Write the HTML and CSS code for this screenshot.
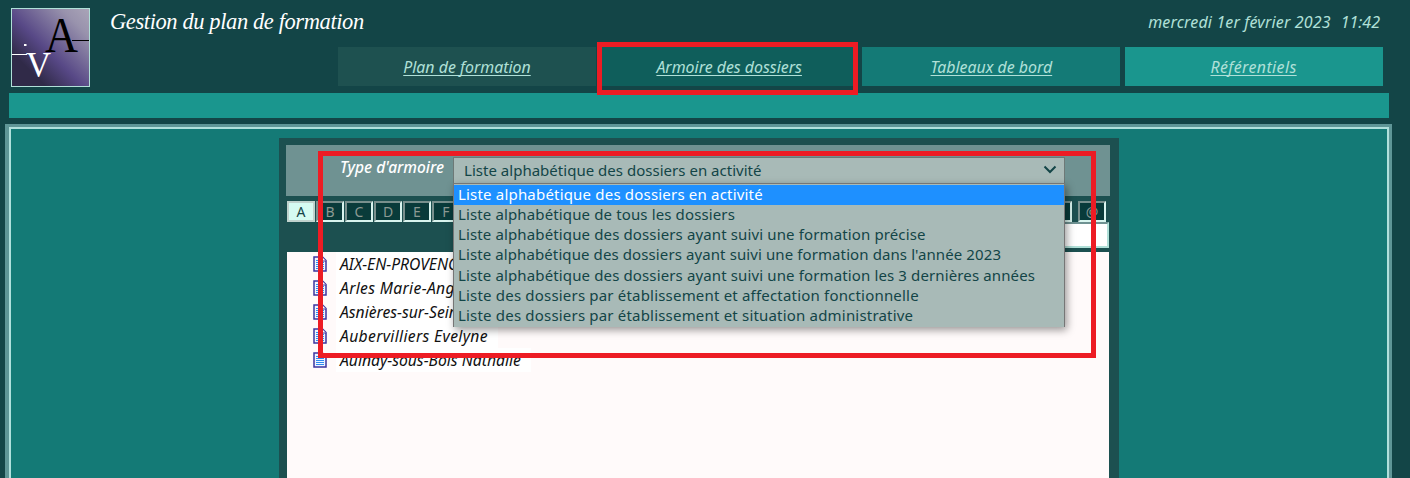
FILE: index.html
```html
<!DOCTYPE html>
<html lang="fr">
<head>
<meta charset="utf-8">
<title>Gestion du plan de formation</title>
<link rel="stylesheet" href="styles.css">
</head>
<body>
<header class="header">
  <svg class="logo" width="79" height="79" viewBox="0 0 79 79">
    <defs><linearGradient id="g" x1="0" y1="1" x2="1" y2="0">
      <stop offset="0" stop-color="#302a48"/><stop offset=".22" stop-color="#302a48"/><stop offset=".46" stop-color="#574886"/><stop offset=".82" stop-color="#9993ad"/><stop offset="1" stop-color="#aaa5b8"/>
    </linearGradient></defs>
    <rect x=".5" y=".5" width="78" height="78" fill="url(#g)" stroke="#b0e0d8"/>
    <path d="M61 32.5H78" stroke="#000"/>
    <path d="M1 46.5H16" stroke="#fff"/>
    <rect x="13" y="36" width="2.5" height="2" fill="#fff"/>
    <text class="logo-a" x="34" y="44" textLength="33" lengthAdjust="spacingAndGlyphs">A</text>
    <text class="logo-v" x="15" y="69" textLength="25" lengthAdjust="spacingAndGlyphs">V</text>
  </svg>
  <div class="head-main">
    <div class="head-row">
      <h1 class="title">Gestion du plan de formation</h1>
      <div class="date"><span class="day">mercredi 1er février 2023</span><span class="time">11:42</span></div>
    </div>
    <nav class="tabs">
      <a class="tab tab-plan" href="#">Plan de formation</a>
      <a class="tab tab-files" href="#">Armoire des dossiers</a>
      <a class="tab tab-board" href="#">Tableaux de bord</a>
      <a class="tab tab-refs" href="#">Référentiels</a>
    </nav>
  </div>
</header>
<div class="strip"></div>
<main class="frame">
  <section class="panel">
    <div class="type-bar">
      <label class="type-label">Type d'armoire</label>
      <div class="select">
        <div class="select-box"><span>Liste alphabétique des dossiers en activité</span>
          <svg width="14" height="9" viewBox="0 0 14 9"><path d="M1.5 1.5L7 7L12.500 1.500" fill="none" stroke="#134547" stroke-width="2"/></svg>
        </div>
        <ul class="options">
          <li class="option selected">Liste alphabétique des dossiers en activité</li>
          <li class="option">Liste alphabétique de tous les dossiers</li>
          <li class="option">Liste alphabétique des dossiers ayant suivi une formation précise</li>
          <li class="option year">Liste alphabétique des dossiers ayant suivi une formation dans l'année 2023</li>
          <li class="option">Liste alphabétique des dossiers ayant suivi une formation les 3 dernières années</li>
          <li class="option by-site">Liste des dossiers par établissement et affectation fonctionnelle</li>
          <li class="option by-site">Liste des dossiers par établissement et situation administrative</li>
        </ul>
      </div>
    </div>
    <div class="letters">
      <b class="letter current">A</b><b class="letter">B</b><b class="letter">C</b><b class="letter">D</b><b class="letter">E</b><b class="letter">F</b><b class="letter filler"></b><b class="letter at">@</b>
    </div>
    <div class="search-row"><div class="search"></div></div>
    <ul class="people">
      <li class="person"><svg class="doc" viewBox="0 0 14 16"><use href="#doc"/></svg><span>AIX-EN-PROVENCE</span></li>
      <li class="person wide"><svg class="doc" viewBox="0 0 14 16"><use href="#doc"/></svg><span>Arles Marie-Ange</span></li>
      <li class="person"><svg class="doc" viewBox="0 0 14 16"><use href="#doc"/></svg><span>Asnières-sur-Seine</span></li>
      <li class="person wide"><svg class="doc" viewBox="0 0 14 16"><use href="#doc"/></svg><span>Aubervilliers Evelyne</span></li>
      <li class="person"><svg class="doc" viewBox="0 0 14 16"><use href="#doc"/></svg><span>Aulnay-sous-Bois Nathalie</span></li>
    </ul>
  </section>
</main>
<svg class="symbols" width="0" height="0"><symbol id="doc" viewBox="0 0 14 16">
  <path d="M1 1H9.500L13 4.500V15H1Z" fill="#eef4ff" stroke="#3d35a0" stroke-width="1.500"/>
  <path d="M9 1V5H13" fill="#fff" stroke="#3d35a0"/>
  <path d="M3 4.500H8M3 6.500H11M3 8.500H11M3 10.500H11M3 12.500H11" stroke="#2f8cf0"/>
</symbol></svg>
<div class="mark mark-tab"></div>
<div class="mark mark-list"></div>
</body>
</html>
```
FILE: styles.css
```css
* { box-sizing: border-box; }
body { margin: 0; width: 1410px; height: 478px; overflow: hidden; position: relative; background: #134547; font-family: "Noto Sans", "Open Sans", sans-serif; font-size: 15px; color: #134547; }
ul { list-style: none; margin: 0; padding: 0; }
.header { display: flex; height: 93px; padding: 8px 27px 0 11px; gap: 20px; }
.logo { flex: none; }
.logo-a { font: 50px "Liberation Serif", serif; fill: #000; }
.logo-v { font: 36px "Liberation Serif", serif; fill: #fff; }
.head-main { flex: 1; }
.head-row { display: flex; justify-content: space-between; height: 39px; }
.title { margin: 0; font: italic 22.5px/28px "Liberation Serif", serif; letter-spacing: -.4px; color: #fff; white-space: nowrap; }
.date { display: flex; gap: 10px; padding: 3px 3px 0 0; font-size: 16px; line-height: 22px; font-style: italic; color: #b0e0d8; white-space: nowrap; }
.day { letter-spacing: .15px; }
.tabs { display: grid; grid-template-columns: repeat(4, 258px); column-gap: 4.2px; margin-left: 228px; }
.tab { height: 39px; font-size: 15.9px; line-height: 41px; text-align: center; font-style: italic; color: #b0e0d8; text-underline-offset: 2px; text-decoration-skip-ink: none; white-space: nowrap; }
.tab-plan { background: #1e5150; }
.tab-files { background: #0f5e5b; }
.tab-board { background: #147a76; }
.tab-refs { background: #1a968e; letter-spacing: .4px; }
.strip { height: 25px; margin: 0 21px 6px 9px; background: #1a968e; }
.frame { margin: 0 18px 0 5px; height: 354px; background: #147a76; border: solid #5f9697; border-width: 3px 3px 0 4px; box-shadow: inset 0 2px #b0e0dc, inset 2px 0 #b0e0dc, inset -2px 0 #b0e0dc; padding: 11px 0 0 270px; }
.panel { width: 840px; height: 340px; background: #1c5050; padding: 7px 9px 0 7px; }
.type-bar { display: flex; height: 51px; background: #6f9292; padding: 12px 45px 0 54px; }
.type-label { width: 113px; font-size: 15.5px; line-height: 21px; font-style: italic; font-weight: 500; color: #fff; white-space: nowrap; }
.select { position: relative; width: 612px; height: 27px; }
.select-box { display: flex; align-items: center; justify-content: space-between; height: 27px; border: 1px solid #6d7977; background: #a8bab7; padding: 0 7px 2px 10px; letter-spacing: .02px; white-space: nowrap; }
.options { position: absolute; z-index: 2; left: 0; top: 26px; width: 612px; height: 144px; padding-top: 1px; background: #a8bab7; border: solid #767676; border-width: 1px 1px 0; box-shadow: 2px 3px 8px rgba(0,0,0,.4); }
.option { height: 20.15px; line-height: 18px; padding-left: 4px; letter-spacing: .13px; white-space: nowrap; }
.option.selected { background: #1e90ff; color: #fff; letter-spacing: .19px; }
.option.year { letter-spacing: .1px; }
.option.by-site { letter-spacing: .19px; }
.letters { display: flex; gap: 1px; margin: 5px 0 0 1px; height: 21px; }
.letter { width: 28px; height: 21px; border: 2px solid; border-color: #78908d #d9f5ef #d9f5ef #78908d; background: #093b3a; color: #8b9993; font: 14px/17px "Noto Sans", sans-serif; text-align: center; }
.letter.current { background: #d5fbf2; color: #134547; border-color: #c0d2cd; }
.letter.filler { width: 611px; }
.letter.at { margin-left: 5px; }
.search-row { display: flex; justify-content: flex-end; height: 30px; padding-right: 1px; }
.search { width: 360px; height: 26px; background: #fff; border: 2px solid; border-color: #6f9292 #b0e0d8 #b0e0d8 #6f9292; }
.people { margin: 0 1px; height: 226px; background: #fffafa; width: 822px; }
.person { display: flex; align-items: center; height: 24px; padding-left: 26px; font-size: 15.7px; font-style: italic; color: #111; white-space: nowrap; }
.person.wide { letter-spacing: .33px; }
.doc { width: 14px; height: 16px; margin-right: 9px; }
.person span { background: #fff; padding: 0 10px 0 4px; line-height: 24px; }
.symbols { position: absolute; }
.mark { position: absolute; z-index: 3; border: 5px solid #ed1c24; }
.mark-tab { left: 597px; top: 42px; width: 261px; height: 53px; }
.mark-list { left: 318px; top: 151px; width: 778px; height: 207px; }
```
